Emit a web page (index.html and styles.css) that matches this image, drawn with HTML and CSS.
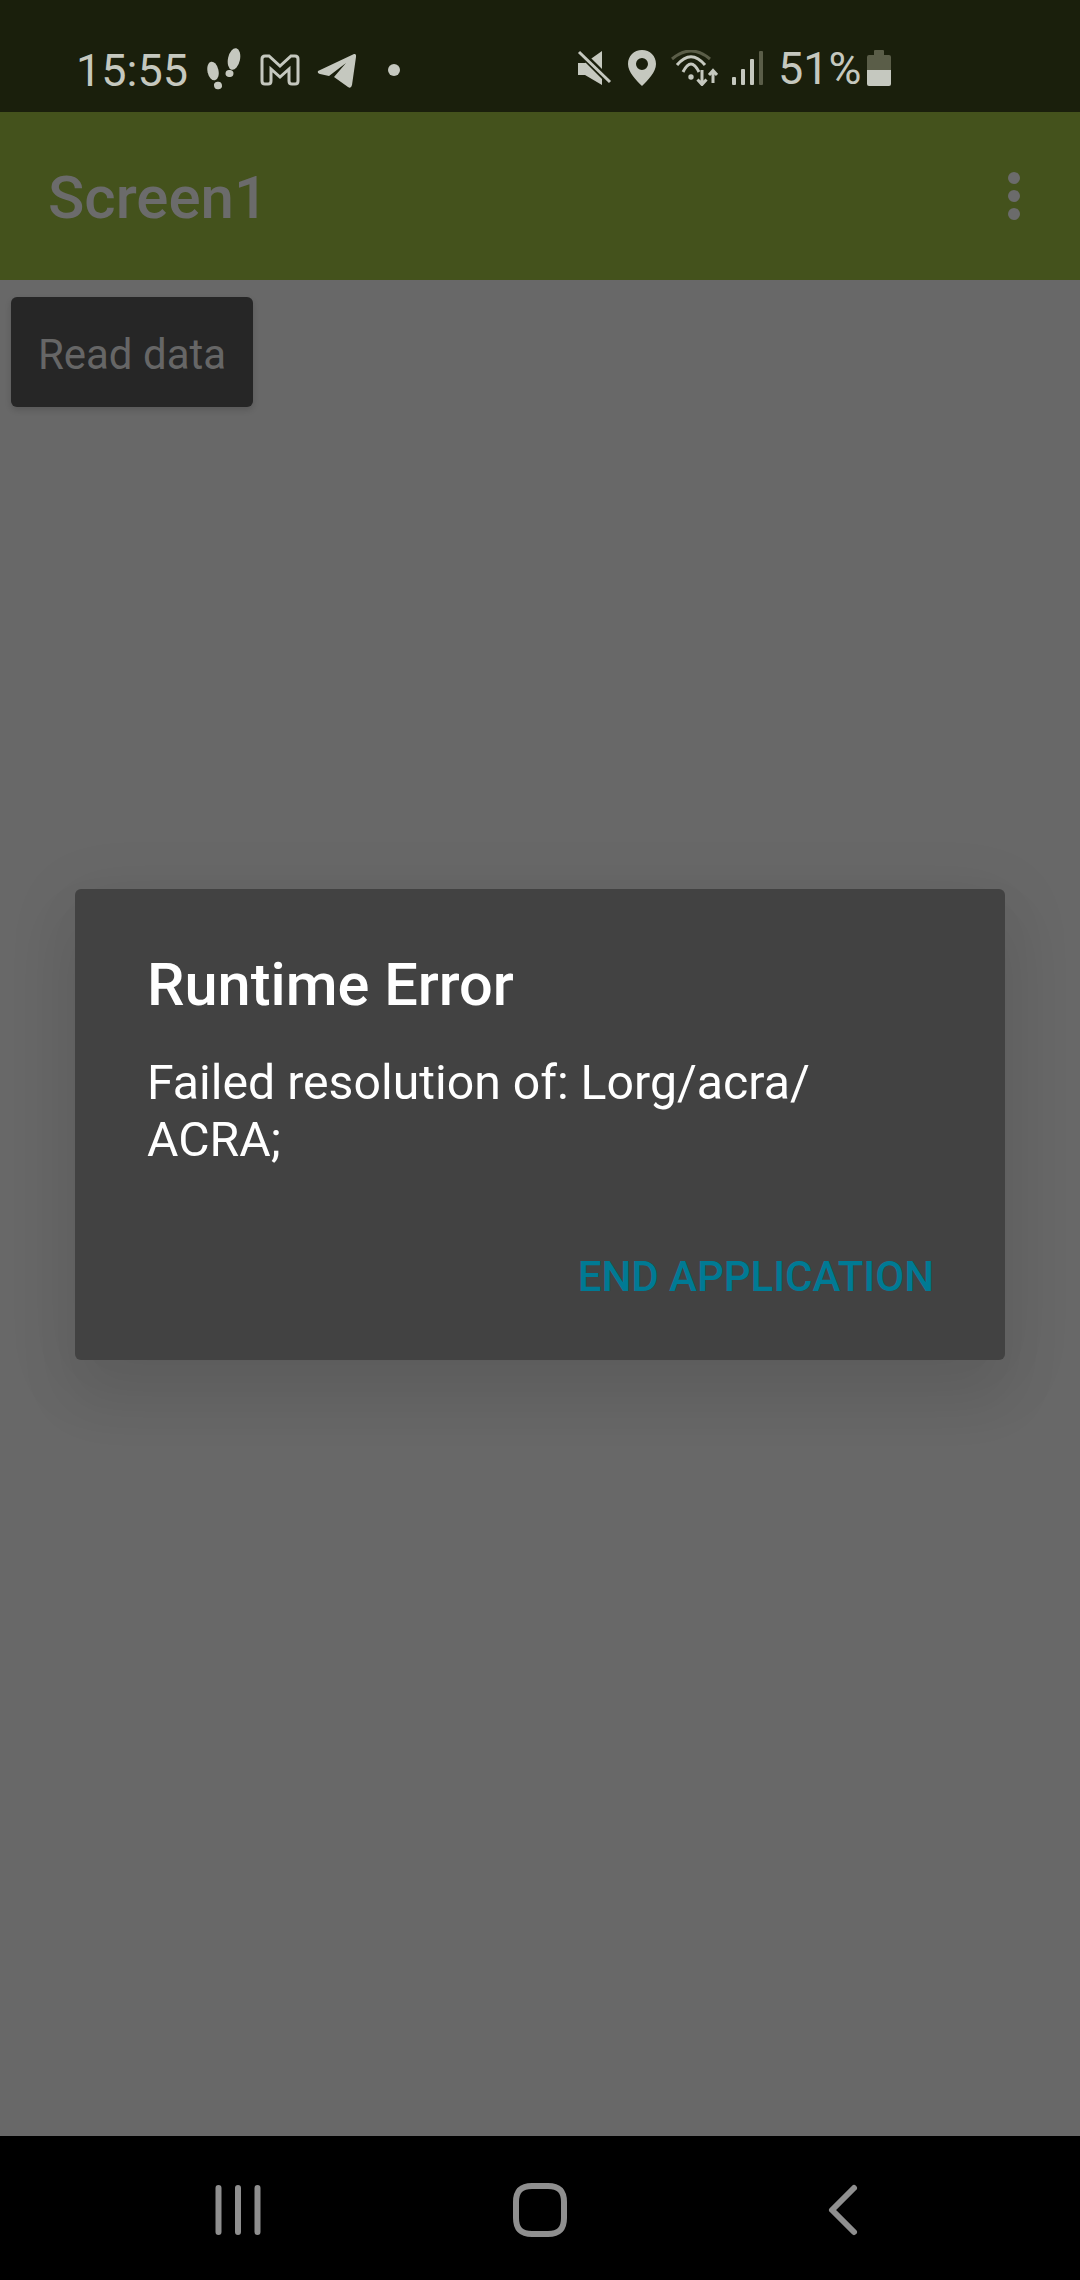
FILE: index.html
```html
<!DOCTYPE html>
<html>
<head>
    <meta charset="UTF-8">
    <title>Screen1</title>
    <link rel="stylesheet" href="styles.css">
</head>
<body>
<div class="screen">
    <div class="status">
        <div class="statusLeft">
            <span class="time">15:55</span>
            <svg class="steps" width="36" height="44" viewBox="0 0 36 44">
                <ellipse cx="27" cy="12" rx="6" ry="11" transform="rotate(12 27 12)"/>
                <ellipse cx="22.5" cy="26.5" rx="4" ry="3.5" transform="rotate(12 22.5 26.5)"/>
                <ellipse cx="6" cy="24" rx="5.5" ry="9.5" transform="rotate(-12 6 24)"/>
                <ellipse cx="11" cy="38.5" rx="4" ry="3.8" transform="rotate(-12 11 38.5)"/>
            </svg>
            <svg class="mail" width="40" height="32" viewBox="0 0 40 32">
                <path d="M2 5Q2 2 5 2H9L20 12L31 2H35Q38 2 38 5V27Q38 30 35 30H32Q29 30 29 27V15L20 23L11 15V27Q11 30 8 30H5Q2 30 2 27Z"/>
            </svg>
            <svg class="plane" width="40" height="36" viewBox="0 0 40 36">
                <path d="M1 18L37 1Q39.500 .5 39 4L35 32Q34 36 31 34L17 24L29 10L12 23L3 21Q0 20 1 18Z"/>
            </svg>
            <span class="dot"></span>
        </div>
        <div class="statusRight">
            <svg class="mute" width="35" height="36" viewBox="0 0 35 36">
                <path d="M1 13H8L25 1V35L8 25H1Z"/>
                <line class="gap" x1="2" y1="1" x2="34" y2="33"/>
                <line class="cut" x1="2" y1="2" x2="33" y2="32"/>
            </svg>
            <svg class="pin" width="28" height="36" viewBox="0 0 28 36">
                <path fill-rule="evenodd" d="M14 0C22 0 28 6 28 14C28 22 20 30 14 36C8 30 0 22 0 14C0 6 6 0 14 0ZM14 8A6 6 0 1 0 14 20A6 6 0 1 0 14 8Z"/>
            </svg>
            <svg class="wifi" width="48" height="36" viewBox="0 0 48 36">
                <path class="arcDim" d="M2 9Q21 -7 40 9"/>
                <path class="arc" d="M7 15Q21 -1.600 35 15"/>
                <path class="arc" d="M13 22Q21 6 29 22"/>
                <circle cx="21" cy="27" r="2.700"/>
                <path class="arrow" d="M32 20V34M27.500 29.500L32 34.500L36.500 29.500"/>
                <path class="arrow" d="M43 33V21M39 25L43 20.500L47 25"/>
            </svg>
            <svg class="signal" width="32" height="34" viewBox="0 0 32 34">
                <rect x="0" y="26" width="4" height="8" rx="1"/>
                <rect x="9" y="18" width="4" height="16" rx="1"/>
                <rect x="18" y="8" width="4" height="26" rx="1"/>
                <rect class="dim" x="27" y="0" width="4" height="34" rx="1"/>
            </svg>
            <span class="level">51%</span>
            <svg class="battery" width="24" height="36" viewBox="0 0 24 36">
                <path class="dim" d="M7 1Q7 0 8 0H16Q17 0 17 1V5H22Q24 5 24 7V20H0V7Q0 5 2 5H7Z"/>
                <path d="M0 20H24V34Q24 36 22 36H2Q0 36 0 34Z"/>
            </svg>
        </div>
    </div>

    <div class="appBar">
        <h1>Screen1</h1>
        <div class="more"><i></i><i></i><i></i></div>
    </div>

    <div class="content">
        <div class="readBtn">Read data</div>
    </div>

    <div class="nav">
        <svg width="60" height="60" viewBox="0 0 60 60">
            <path d="M10.500 8V52M30 8V52M49.500 8V52"/>
        </svg>
        <svg width="60" height="60" viewBox="0 0 60 60">
            <path d="M22 6H38C49 6 54 11 54 22V38C54 49 49 54 38 54H22C11 54 6 49 6 38V22C6 11 11 6 22 6Z"/>
        </svg>
        <svg width="60" height="60" viewBox="0 0 60 60">
            <path d="M42 8L20 30L42 52" class="back"/>
        </svg>
    </div>

    <div class="dialogLayer">
        <div class="dialog">
            <h2>Runtime Error</h2>
            <p>Failed resolution of: Lorg/acra/<br>ACRA;</p>
            <div class="actions"><span>END APPLICATION</span></div>
        </div>
    </div>
</div>
</body>
</html>
```

FILE: styles.css
```css
* {
    margin: 0;
    padding: 0;
    box-sizing: border-box;
}

body {
    width: 1080px;
    height: 2280px;
    overflow: hidden;
    font-family: Roboto, "Liberation Sans", sans-serif;
}

.screen {
    position: relative;
    display: flex;
    flex-direction: column;
    height: 2280px;
    background: #686868;
}

/*status bar*/
.status {
    display: flex;
    height: 112px;
    padding-top: 24px;
    padding-left: 76px;
    align-items: center;
    background: #1a1f0c;
    color: #c5c8bf;
}

.status svg {
    display: block;
    fill: #c5c8bf;
}

.statusLeft, .statusRight {
    display: flex;
    align-items: center;
}

.statusLeft {
    width: 501px;
}

.time {
    font-size: 45px;
    line-height: 52px;
    margin-top: 5px;
}

.steps {
    margin-left: 19px;
    margin-top: 2px;
}

.mail {
    margin-left: 17px;
    margin-top: 3px;
}

.mail path {
    fill: none;
    stroke: #c5c8bf;
    stroke-width: 3;
}

.plane {
    margin-left: 17px;
    margin-top: 5px;
}

.dot {
    width: 12px;
    height: 12px;
    margin-left: 31px;
    margin-top: 4px;
    border-radius: 50%;
    background: #c5c8bf;
}

.mute .gap {
    stroke: #1a1f0c;
    stroke-width: 7;
}

.mute .cut {
    stroke: #c5c8bf;
    stroke-width: 3;
}

.pin {
    margin-left: 16px;
}

.wifi {
    margin-left: 14px;
}

.wifi .arc, .wifi .arcDim, .wifi .arrow {
    fill: none;
    stroke: #c5c8bf;
    stroke-width: 3;
}

.wifi .arcDim {
    stroke: #5a5d48;
}

.signal {
    margin-left: 14px;
}

.status .dim {
    fill: #5a5d48;
}

.level {
    margin-left: 14px;
    margin-top: 2px;
    font-size: 45px;
    line-height: 52px;
}

.battery {
    margin-left: 5px;
}

/*title bar*/
.appBar {
    display: flex;
    height: 168px;
    padding: 2px 60px 0 48px;
    align-items: center;
    justify-content: space-between;
    background: #44521c;
}

.appBar h1 {
    font-size: 60px;
    font-weight: 500;
    color: #6b6b6b;
}

.more {
    margin-top: -2px;
}

.more i {
    display: block;
    width: 12px;
    height: 12px;
    margin-top: 6px;
    border-radius: 50%;
    background: #6b6b6b;
}

.more i:first-child {
    margin-top: 0;
}

/*page content*/
.content {
    flex: 1;
    padding: 17px 11px;
}

.readBtn {
    width: 242px;
    height: 110px;
    padding-top: 3px;
    line-height: 110px;
    text-align: center;
    font-size: 42px;
    color: #666;
    background: #262626;
    border-radius: 6px;
    box-shadow: 0 3px 6px rgba(0, 0, 0, .15);
}

/*bottom navigation*/
.nav {
    display: grid;
    grid-template-columns: repeat(3, 302px);
    height: 144px;
    padding-top: 3px;
    justify-content: center;
    justify-items: center;
    align-items: center;
    background: #000;
}

.nav svg {
    display: block;
}

.nav path {
    fill: none;
    stroke: #8f8f8f;
    stroke-width: 6;
    stroke-linecap: round;
    stroke-linejoin: round;
}

/*dialog*/
.dialogLayer {
    position: absolute;
    top: 112px;
    left: 0;
    right: 0;
    bottom: 144px;
    display: flex;
    align-items: center;
    justify-content: center;
}

.dialog {
    width: 930px;
    height: 471px;
    padding: 62px 72px 0;
    background: #424242;
    border-radius: 6px;
    box-shadow: 0 36px 60px 4px rgba(0, 0, 0, .07), 0 14px 70px 12px rgba(0, 0, 0, .05);
}

.dialog h2 {
    font-size: 59.500px;
    line-height: 68px;
    font-weight: 500;
    color: #fff;
}

.dialog p {
    margin-top: 35px;
    font-size: 48.200px;
    line-height: 57px;
    color: #fff;
}

.actions {
    display: flex;
    justify-content: flex-end;
    margin-top: 84px;
    margin-right: -1px;
}

.actions span {
    font-size: 42px;
    line-height: 50px;
    font-weight: 500;
    color: #007a94;
}
```
